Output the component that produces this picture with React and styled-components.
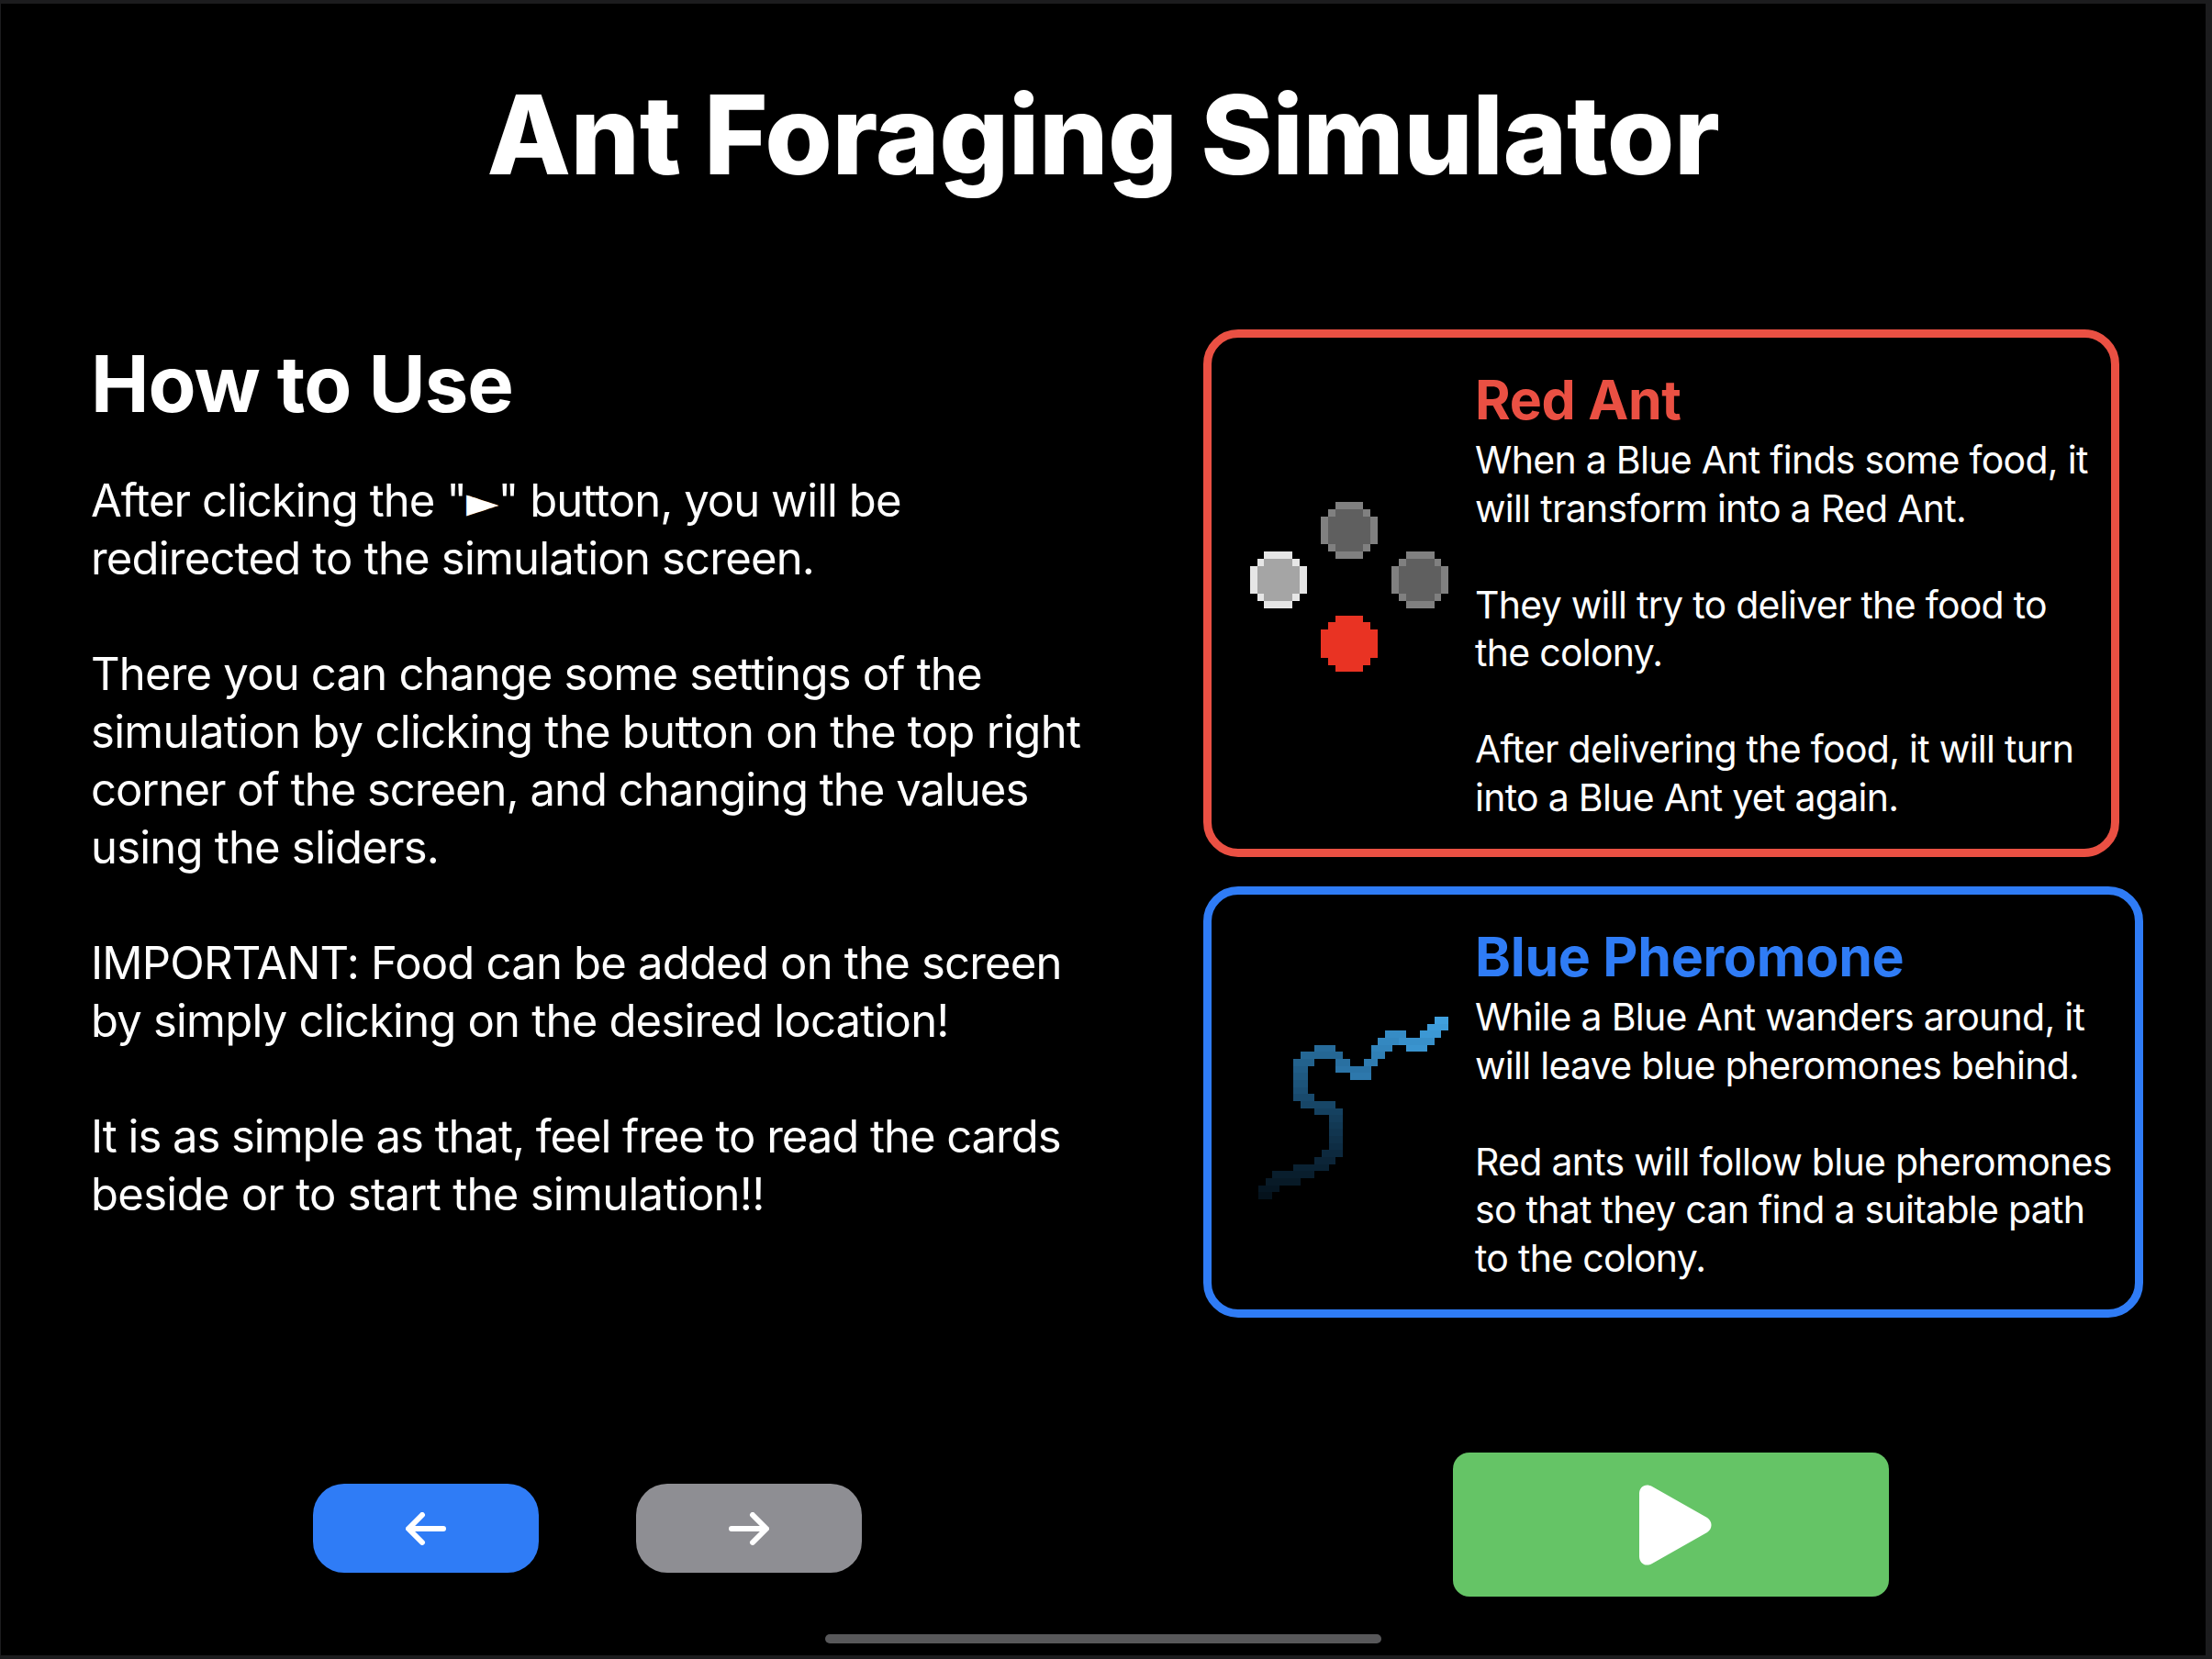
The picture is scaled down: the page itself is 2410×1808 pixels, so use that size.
import React from 'react';
import styled, { createGlobalStyle } from 'styled-components';

const Global = createGlobalStyle`
  html, body { margin: 0; padding: 0; background: #000; }
  * { box-sizing: border-box; }
`;

const Screen = styled.div`
  position: relative;
  width: 2410px;
  height: 1808px;
  display: flex;
  flex-direction: column;
  background: #000;
  color: #fff;
  font-family: Inter, "Liberation Sans", sans-serif;
  border-style: solid;
  border-color: #1c1c1e;
  border-width: 4px 7px 4px 1px;
  overflow: hidden;
`;

const Title = styled.h1`
  margin: 77px 0 0;
  font-size: 119px;
  line-height: 132px;
  font-weight: 800;
  letter-spacing: -0.5px;
  text-align: center;
  white-space: nowrap;
`;

const Columns = styled.main`
  display: flex;
  align-items: flex-start;
  margin-top: 146px;
  padding-left: 98px;
`;

const HowTo = styled.section`
  width: 1212px;
  flex: none;
`;

const HowToHeading = styled.h2`
  margin: 10px 0 0;
  font-size: 85px;
  line-height: 100px;
  font-weight: 700;
  letter-spacing: -1px;
`;

const Paragraph = styled.p`
  margin: 63px 0 0;
  font-size: 49px;
  line-height: 63px;
  font-weight: 400;
  white-space: nowrap;
  &:first-of-type { margin-top: 44.5px; }
`;

const Line = styled.span`
  display: block;
  letter-spacing: ${p => p.$track ?? -0.8}px;
`;

const PlayGlyph = styled.span`
  font-family: "DejaVu Sans", sans-serif;
  font-size: 46px;
  line-height: 1;
`;

const Cards = styled.section`
  display: flex;
  flex-direction: column;
  align-items: flex-start;
  gap: 32.5px;
`;

const Card = styled.article`
  display: flex;
  align-items: center;
  border: 9px solid ${p => p.$tone};
  border-radius: 38px;
  padding: 29px 25px 29.5px 0;
`;

const Visual = styled.svg`
  flex: none;
  display: block;
  width: ${p => p.$width}px;
  margin: ${p => p.$top}px 29px ${p => p.$bottom}px ${p => p.$inset}px;
  shape-rendering: crispEdges;
`;

const CardText = styled.div`
  flex: none;
`;

const CardTitle = styled.h3`
  margin: 0;
  font-size: 59px;
  line-height: 78px;
  font-weight: 700;
  letter-spacing: -0.3px;
  color: ${p => p.$tone};
`;

const CardBody = styled.p`
  margin: 0;
  font-size: 41px;
  line-height: 52.5px;
  letter-spacing: -0.72px;
  white-space: nowrap;
`;

const Footer = styled.footer`
  margin-top: auto;
  padding: 0 0 64px 340px;
  display: flex;
  align-items: center;
`;

const Nav = styled.nav`
  display: flex;
  gap: 106px;
  margin-top: 8px;
`;

const NavButton = styled.button`
  width: 246px;
  height: 97px;
  border: 0;
  padding: 0;
  border-radius: 34px;
  background: ${p => p.$bg};
  display: flex;
  align-items: center;
  justify-content: center;
`;

const StartButton = styled.button`
  width: 475px;
  height: 157px;
  margin-left: 644px;
  border: 0;
  padding: 0 0 0 10px;
  border-radius: 18px;
  background: #65c466;
  display: flex;
  align-items: center;
  justify-content: center;
`;

const HomeIndicator = styled.div`
  position: absolute;
  left: 898px;
  bottom: 13px;
  width: 606px;
  height: 10px;
  border-radius: 5px;
  background: #58585a;
`;

const ANT = ['..xxxx..', '.xooooX.', 'xoooooox', 'xoooooox', 'xoooooox', 'xoooooox', '.xooooX.', '..xxxx..'];

const PixelDot = ({ x, y, edge, fill }) => (
  <g>
    {ANT.flatMap((row, r) =>
      [...row].map((c, i) =>
        c === '.' ? null : (
          <rect
            key={`${r}-${i}`}
            x={x + i}
            y={y + r}
            width={1}
            height={1}
            fill={c === 'o' ? fill : edge}
          />
        )
      )
    )}
  </g>
);

const AntIcon = () => (
  <Visual $inset={42} $width={216} $top={0} $bottom={12} viewBox="0 0 28 24" height="185.5" role="img" aria-label="Ants">
    <PixelDot x={0} y={7} edge="#e6e6e6" fill="#a5a5a5" />
    <PixelDot x={10} y={0} edge="#808080" fill="#5f5f5f" />
    <PixelDot x={20} y={7} edge="#808080" fill="#5f5f5f" />
    <PixelDot x={10} y={16} edge="#e93323" fill="#e93323" />
  </Visual>
);

// Trail cells [row, firstCol, lastCol], from faint tail to bright head.
const TRAIL = [
  [25, 0, 1], [24, 0, 2], [23, 1, 5], [22, 2, 7], [21, 5, 9], [20, 8, 10], [19, 9, 11],
  [18, 10, 11], [17, 10, 11], [16, 10, 11], [15, 10, 11], [14, 10, 11], [13, 8, 11],
  [12, 6, 10], [11, 5, 7], [10, 5, 6], [9, 5, 6], [8, 5, 6], [7, 5, 6], [6, 5, 7],
  [5, 6, 11], [4, 8, 10], [6, 11, 12], [7, 11, 15], [8, 13, 15], [6, 15, 16], [5, 16, 17],
  [4, 16, 18], [3, 17, 20], [2, 18, 20], [3, 20, 24], [4, 21, 23], [2, 23, 25], [1, 24, 26], [0, 25, 26],
];

const trailColor = t => {
  const stops = [[5, 18, 28], [20, 62, 92], [42, 115, 165], [64, 160, 222]];
  const at = t * (stops.length - 1);
  const i = Math.min(Math.floor(at), stops.length - 2);
  const f = at - i;
  const c = stops[i].map((v, k) => Math.round(v + (stops[i + 1][k] - v) * f));
  return `rgb(${c.join(',')})`;
};

const TrailIcon = () => (
  <Visual $inset={51} $width={207} $top={13} $bottom={0} viewBox="0 0 27 26" height="199" role="img" aria-label="Pheromone trail">
    {TRAIL.map(([row, a, b], i) => (
      <rect key={i} x={a} y={row} width={b - a + 1} height={1} fill={trailColor(i / (TRAIL.length - 1))} />
    ))}
  </Visual>
);

const RED = '#ea5043';
const BLUE = '#2f7cf6';

export default function App() {
  return (
    <Screen>
      <Global />
      <Title>Ant Foraging Simulator</Title>
      <Columns>
        <HowTo>
          <HowToHeading>How to Use</HowToHeading>
          <Paragraph>
            <Line $track={-0.95}>After clicking the "<PlayGlyph>►</PlayGlyph>" button, you will be</Line>
            <Line>redirected to the simulation screen.</Line>
          </Paragraph>
          <Paragraph>
            <Line>There you can change some settings of the</Line>
            <Line $track={-0.71}>simulation by clicking the button on the top right</Line>
            <Line $track={-1}>corner of the screen, and changing the values</Line>
            <Line>using the sliders.</Line>
          </Paragraph>
          <Paragraph>
            <Line>IMPORTANT: Food can be added on the screen</Line>
            <Line>by simply clicking on the desired location!</Line>
          </Paragraph>
          <Paragraph>
            <Line $track={-1.04}>It is as simple as that, feel free to read the cards</Line>
            <Line $track={-0.71}>beside or to start the simulation!!</Line>
          </Paragraph>
        </HowTo>
        <Cards>
          <Card $tone={RED}>
            <AntIcon />
            <CardText>
              <CardTitle $tone={RED}>Red Ant</CardTitle>
              <CardBody>
                When a Blue Ant finds some food, it<br />will transform into a Red Ant.<br /><br />
                They will try to deliver the food to<br />the colony.<br /><br />
                After delivering the food, it will turn<br />into a Blue Ant yet again.
              </CardBody>
            </CardText>
          </Card>
          <Card $tone={BLUE}>
            <TrailIcon />
            <CardText>
              <CardTitle $tone={BLUE}>Blue Pheromone</CardTitle>
              <CardBody>
                While a Blue Ant wanders around, it<br />will leave blue pheromones behind.<br /><br />
                Red ants will follow blue pheromones<br />so that they can find a suitable path<br />to the colony.
              </CardBody>
            </CardText>
          </Card>
        </Cards>
      </Columns>
      <Footer>
        <Nav>
          <NavButton $bg="#2f7cf6" aria-label="Back">
            <svg width="44" height="36" viewBox="0 0 44 36" fill="none" stroke="#fff" strokeWidth="6" strokeLinecap="round" strokeLinejoin="round">
              <path d="M41 18H4M18 3 3 18l15 15" />
            </svg>
          </NavButton>
          <NavButton $bg="#8e8e93" aria-label="Forward">
            <svg width="44" height="36" viewBox="0 0 44 36" fill="none" stroke="#fff" strokeWidth="6" strokeLinecap="round" strokeLinejoin="round">
              <path d="M3 18h37M26 3l15 15-15 15" />
            </svg>
          </NavButton>
        </Nav>
        <StartButton aria-label="Start">
          <svg width="80" height="90" viewBox="0 0 80 90">
            <path d="M0 11C0 3 7-1 14 3L74 37c6 4 6 12 0 16L14 87C7 91 0 87 0 79Z" fill="#fff" />
          </svg>
        </StartButton>
      </Footer>
      <HomeIndicator />
    </Screen>
  );
}
